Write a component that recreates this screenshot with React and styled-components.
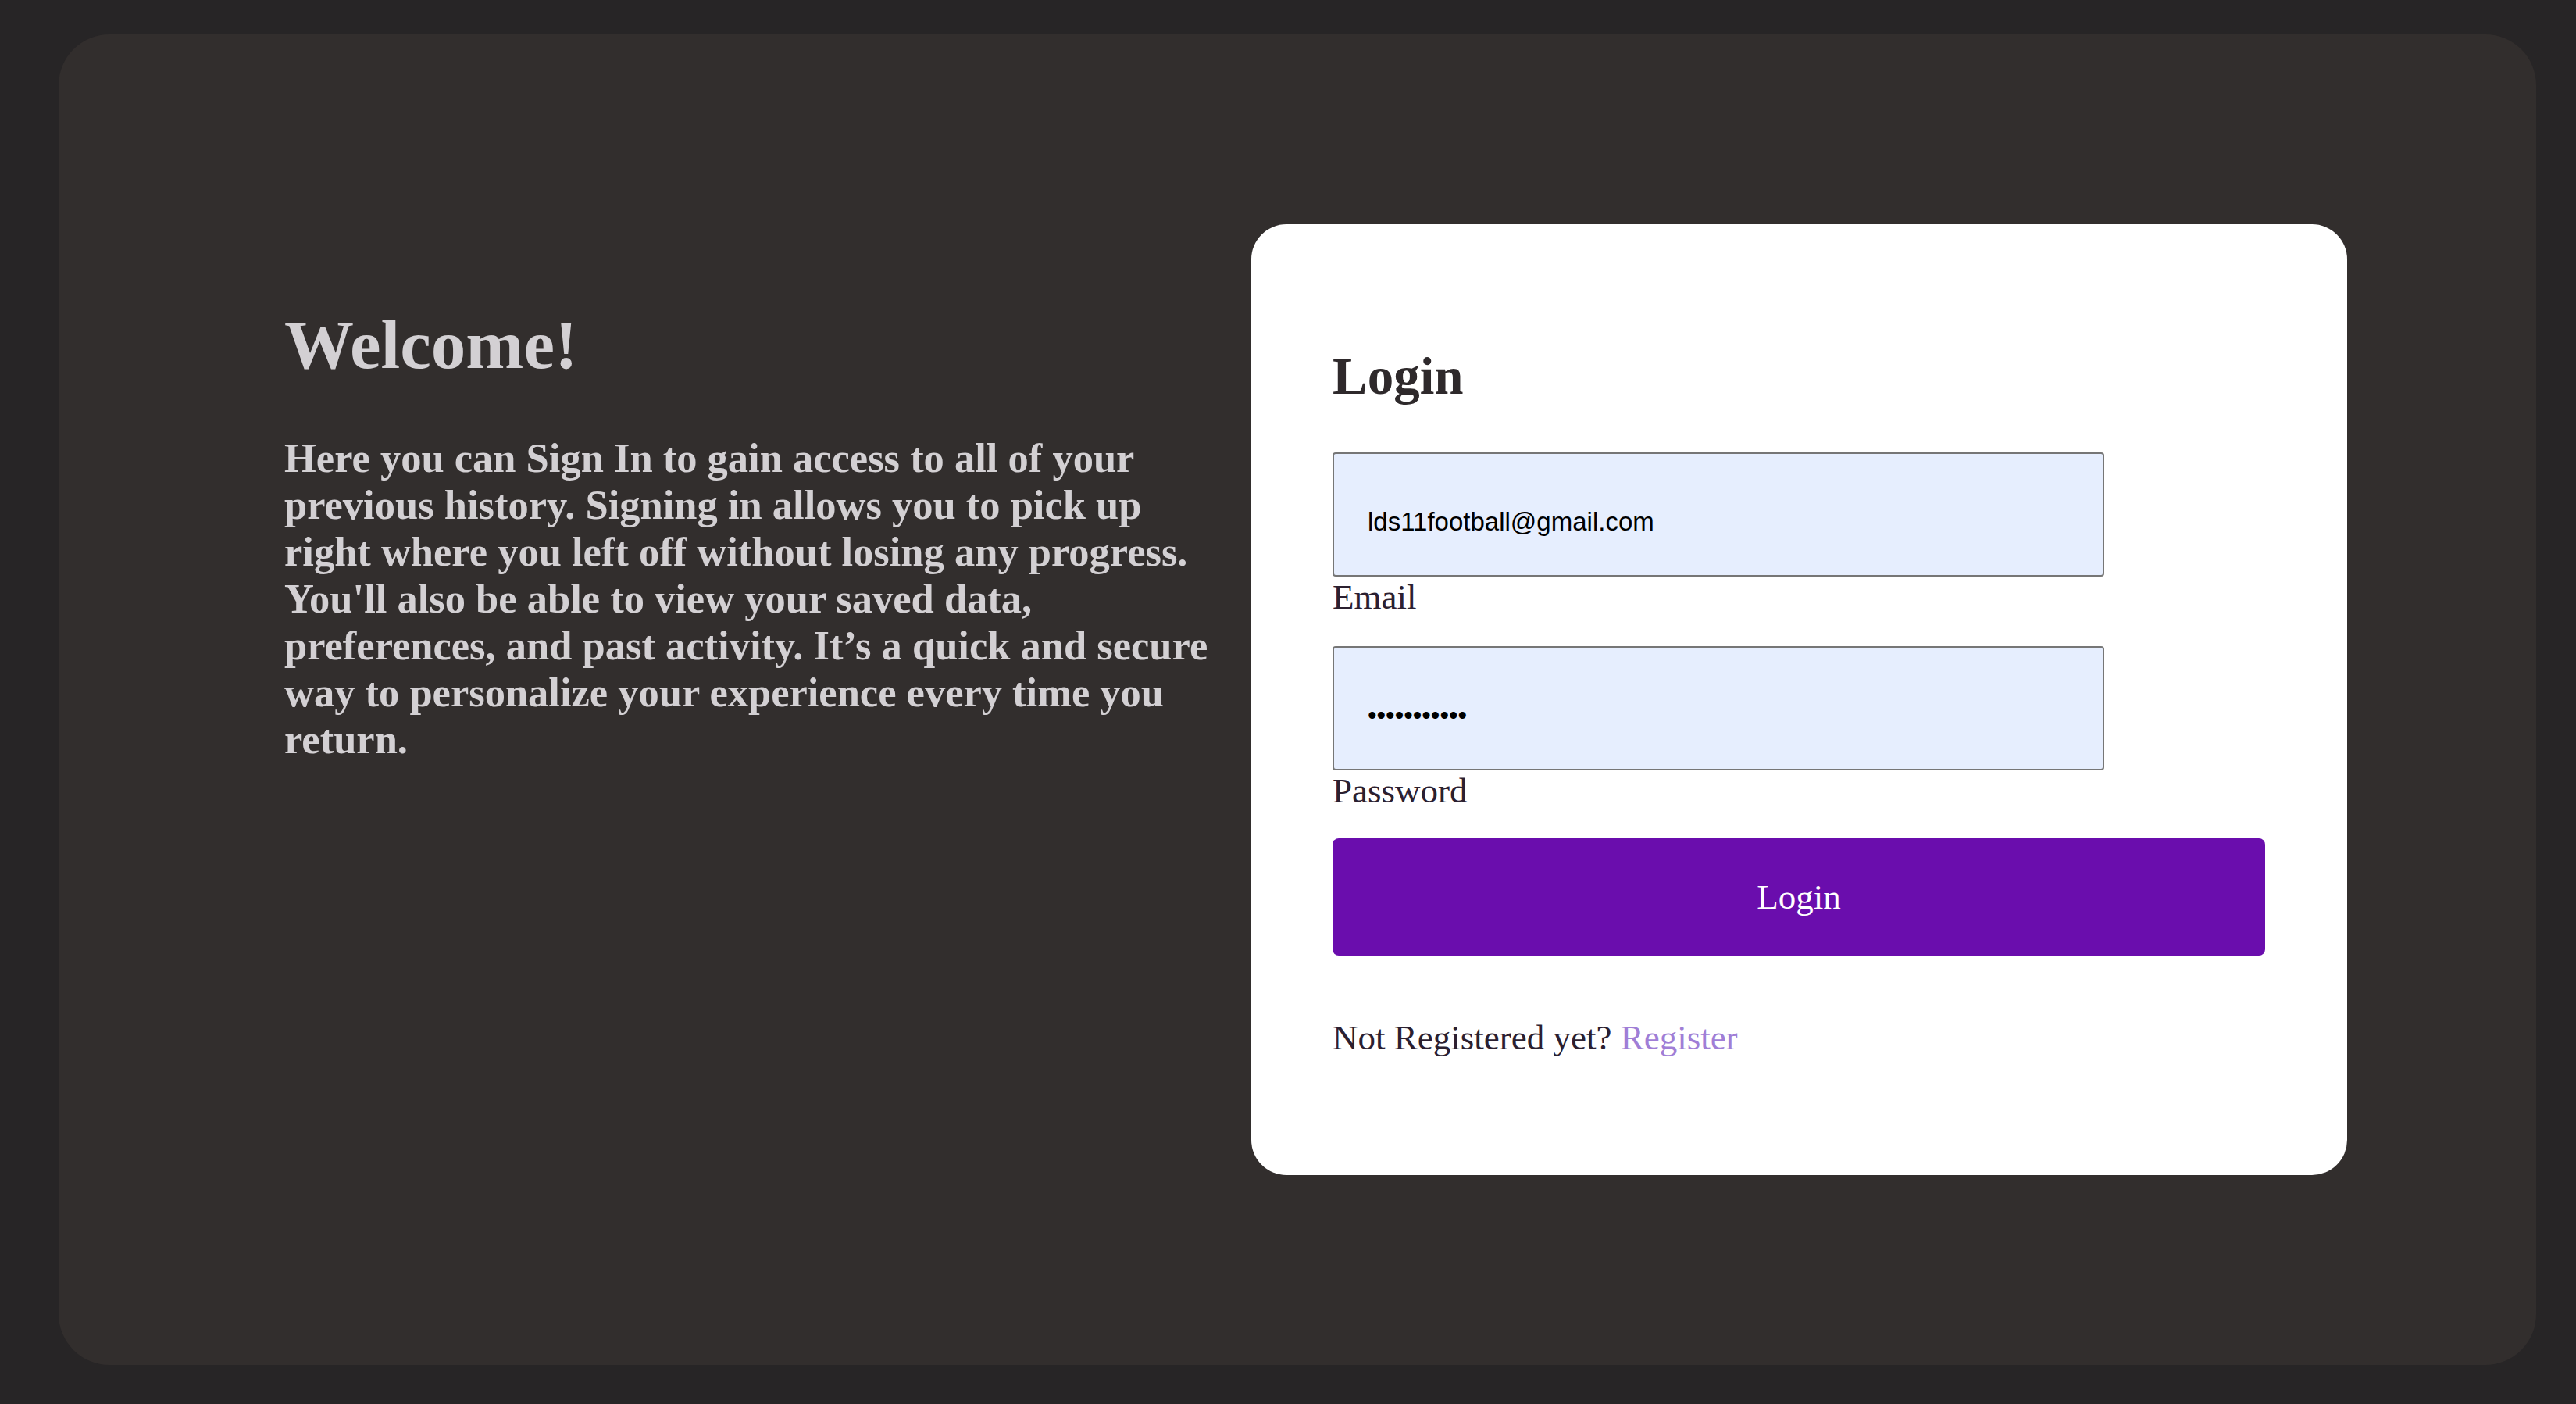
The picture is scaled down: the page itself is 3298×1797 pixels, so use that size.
import styled, { createGlobalStyle } from "styled-components";

const GlobalStyle = createGlobalStyle`
  html,
  body {
    margin: 0;
    padding: 0;
    background: #272526;
  }
  * {
    box-sizing: border-box;
  }
`;

export default function App() {
  return (
    <>
      <GlobalStyle />
      <Page>
        <Panel>
          <Intro>
            <Title>Welcome!</Title>
            <Text>
              Here you can Sign In to gain access to all of your previous
              history. Signing in allows you to pick up right where you left off
              without losing any progress. You'll also be able to view your
              saved data, preferences, and past activity. It’s a quick and
              secure way to personalize your experience every time you return.
            </Text>
          </Intro>
          <Card>
            <Heading>Login</Heading>
            <form onSubmit={(e) => e.preventDefault()}>
              <Input type="email" defaultValue="lds11football@gmail.com" />
              <Label>Email</Label>
              <Input type="password" defaultValue="passwordxyz" spaced />
              <Label>Password</Label>
              <Button type="submit">Login</Button>
            </form>
            <Footer>
              Not Registered yet? <RegisterLink href="#">Register</RegisterLink>
            </Footer>
          </Card>
        </Panel>
      </Page>
    </>
  );
}

const Page = styled.div`
  display: flex;
  height: 100vh;
  padding: 44px 51px 50px 75px;
  background: #272526;
`;

const Panel = styled.main`
  flex: 1;
  display: flex;
  align-items: center;
  padding: 0 242px 0 289px;
  background: #322e2d;
  border-radius: 65px;
`;

const Intro = styled.section`
  align-self: flex-start;
  width: 1205px;
  margin-top: 347px;
  font-family: "Liberation Serif", "Times New Roman", serif;
  color: #d3d0d3;
`;

const Title = styled.h1`
  margin: 0;
  font-size: 89px;
  font-weight: 700;
  line-height: 101px;
`;

const Text = styled.p`
  margin: 64px 0 0;
  font-size: 52.5px;
  font-weight: 700;
  line-height: 60px;
`;

const Card = styled.div`
  width: 1403px;
  margin-left: 33px;
  padding: 156px 105px 150px 104px;
  background: #ffffff;
  border-radius: 45px;
  font-family: "Liberation Serif", "Times New Roman", serif;
  color: #2b2030;
`;

const Heading = styled.h2`
  margin: 0 0 59px;
  font-size: 67px;
  font-weight: 700;
  line-height: 77px;
  color: #2e292b;
`;

const Input = styled.input`
  display: block;
  width: 988px;
  height: 159px;
  margin-top: ${(p) => (p.spaced ? "37px" : "0")};
  padding: 18px 20px 0 43px;
  border: 2px solid #767676;
  border-radius: 4px;
  background: #e6eefe;
  font-family: "Liberation Sans", Arial, sans-serif;
  font-size: 33px;
  color: #000000;
  outline: none;
`;

const Label = styled.label`
  display: block;
  font-size: 45px;
  line-height: 52px;
  color: #2b2030;
`;

const Button = styled.button`
  display: block;
  width: 100%;
  height: 150px;
  margin-top: 35px;
  border: none;
  border-radius: 8px;
  background: #6a0dad;
  color: #ffffff;
  font-family: "Liberation Serif", "Times New Roman", serif;
  font-size: 45px;
  cursor: pointer;
`;

const Footer = styled.p`
  margin: 79px 0 0;
  font-size: 45px;
  line-height: 52px;
  color: #2b2030;
`;

const RegisterLink = styled.a`
  color: #a07ed6;
  text-decoration: none;
`;
